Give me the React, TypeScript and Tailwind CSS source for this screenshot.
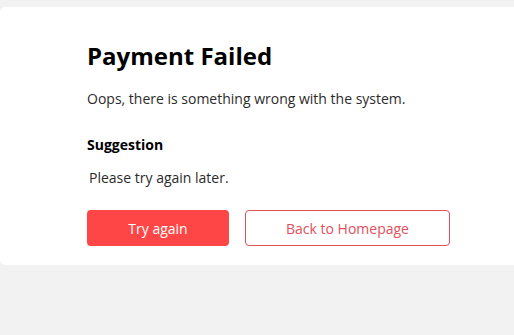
import React from "react";

function App() {
    return (
        <div className="w-[514px] h-[335px] bg-[#f2f2f2] pt-[7px] overflow-hidden font-['Open_Sans',sans-serif]">
            <div className="w-[530px] h-[258px] bg-white rounded-[5px] pl-[87px] pt-[33px]">
                <h1 className="text-[24px] leading-[32px] font-bold text-black">
                    Payment Failed
                </h1>
                <p className="mt-[17px] text-[14px] leading-[20px] text-[#2b2b2b]">
                    Oops, there is something wrong with the system.
                </p>
                <h2 className="mt-[26px] text-[14px] leading-[20px] font-bold text-black">
                    Suggestion
                </h2>
                <p className="mt-[13px] pl-[2px] text-[14px] leading-[20px] text-[#2b2b2b]">
                    Please try again later.
                </p>
                <div className="mt-[22px] flex gap-[16px]">
                    <button className="w-[142px] h-[36px] rounded-[4px] bg-[#ff4646] text-white text-[14px]">
                        Try again
                    </button>
                    <button className="w-[205px] h-[36px] rounded-[4px] border border-[#e0505c] bg-white text-[#e0505c] text-[14px]">
                        Back to Homepage
                    </button>
                </div>
            </div>
        </div>
    );
}

export default App;
